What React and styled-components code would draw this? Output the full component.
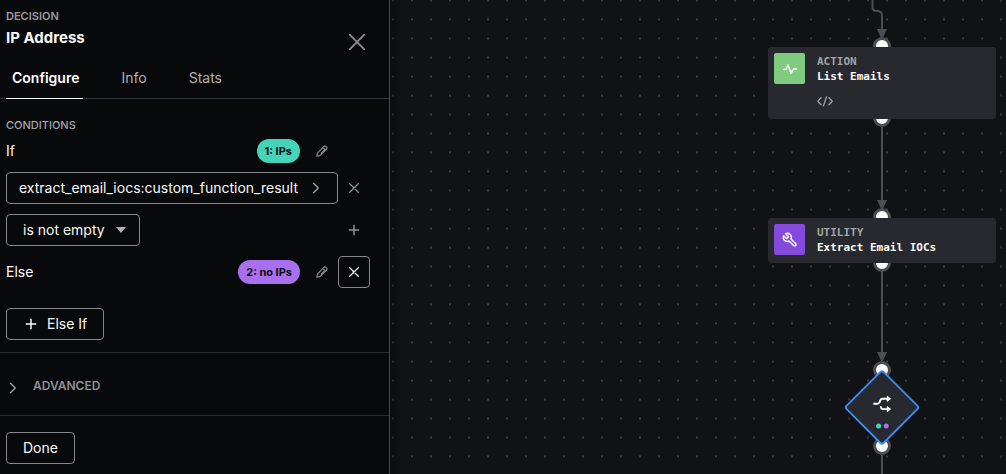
import React from "react";
import styled, { createGlobalStyle } from "styled-components";

const GlobalStyle = createGlobalStyle`
  *, *::before, *::after { box-sizing: border-box; }
  body { margin: 0; background: #111215; }
  button, select { font: inherit; color: inherit; margin: 0; }
`;

const Page = styled.div`
  display: flex;
  min-height: 100vh;
  font-family: Inter, "Liberation Sans", sans-serif;
  font-size: 14px;
  line-height: 20px;
  color: #fafafa;
`;

const Panel = styled.aside`
  flex: none;
  width: 390px;
  background: #08090a;
  border-right: 1px solid #48494d;
`;

const Header = styled.header`
  display: flex;
  justify-content: space-between;
  padding: 8px 20px 0 6px;
`;

const Kicker = styled.div`
  font-size: 11px;
  line-height: 16px;
  font-weight: 600;
  color: #9b9c9f;
`;

const Title = styled.h1`
  margin: 4px 0 0;
  font-size: 15px;
  line-height: 20px;
  font-weight: 700;
`;

const IconButton = styled.button`
  display: flex;
  flex: none;
  align-items: center;
  justify-content: center;
  width: ${(p) => (p.$small ? 24 : 32)}px;
  height: ${(p) => (p.$small ? 24 : 32)}px;
  padding: 0;
  background: none;
  border: 1px solid ${(p) => (p.$outlined ? "#85868a" : "transparent")};
  border-radius: 4px;
  color: ${(p) => (p.$outlined ? "#fafafa" : "#909194")};
  cursor: pointer;
`;

const CloseSlot = styled.div`
  padding-top: 22px;
`;

const Tabs = styled.nav`
  display: flex;
  gap: 32px;
  padding: 4px 6px 0;
  border-bottom: 1px solid #2f3138;
`;

const Tab = styled.button`
  padding: 10px 4px 10px 6px;
  margin-bottom: -1px;
  background: none;
  border: 0;
  border-bottom: 1px solid ${(p) => (p.$active ? "#ffffff" : "transparent")};
  color: ${(p) => (p.$active ? "#ffffff" : "#b0b1b4")};
  font-weight: ${(p) => (p.$active ? 600 : 400)};
  cursor: pointer;
`;

const Section = styled.section`
  padding: 18px 19px 12px 6px;
  border-bottom: 1px solid #2a2b2e;
`;

const SectionLabel = styled.h2`
  margin: 0;
  font-size: 11px;
  line-height: 16px;
  font-weight: 500;
  color: #a5a6a9;
`;

const Row = styled.div`
  display: flex;
  align-items: center;
  min-height: 32px;
  margin-top: ${(p) => p.$gap || 0}px;
`;

const RowLabel = styled.span`
  flex: 1;
`;

const Pill = styled.span`
  padding: 0 8px;
  margin-right: 6px;
  border-radius: 12px;
  background: ${(p) => p.$color};
  color: #08090a;
  font-size: 11px;
  line-height: 24px;
  font-weight: 700;
`;

const OutlineButton = styled.button`
  display: inline-flex;
  align-items: center;
  gap: 8px;
  height: 32px;
  padding: 0 16px;
  background: none;
  border: 1px solid #85868a;
  border-radius: 4px;
  cursor: pointer;
`;

const DataPath = styled(OutlineButton)`
  flex: 1;
  justify-content: space-between;
  padding: 0 17px 0 12px;
`;

const SelectWrap = styled.div`
  position: relative;
  width: 134px;
  margin-right: auto;
`;

const Select = styled.select`
  width: 100%;
  height: 32px;
  padding: 0 32px 0 16px;
  appearance: none;
  background: none;
  border: 1px solid #85868a;
  border-radius: 4px;
`;

const SelectArrow = styled.svg`
  position: absolute;
  right: 14px;
  top: 13px;
  pointer-events: none;
`;

const Advanced = styled.button`
  display: flex;
  align-items: center;
  gap: 16px;
  width: 100%;
  height: 63px;
  padding: 7px 9px 0;
  background: none;
  border: 0;
  border-bottom: 1px solid #2a2b2e;
  color: #909194;
  font-size: 12px;
  font-weight: 600;
  text-align: left;
  cursor: pointer;
`;

const AdvancedLabel = styled.span`
  padding-bottom: 4px;
`;

const Footer = styled.footer`
  padding: 16px 6px 10px;
`;

const Canvas = styled.main`
  position: relative;
  flex: 1;
  min-width: 0;
  overflow: hidden;
  background:
    linear-gradient(90deg, rgba(0, 0, 0, 0.3), transparent 12px),
    url("data:image/svg+xml,%3Csvg xmlns='http://www.w3.org/2000/svg' width='19' height='19'%3E%3Cpath fill='%2326272a' d='M0 0h2v3H0z'/%3E%3Cpath fill='%233a3b3e' d='M0 1h2v1H0z'/%3E%3C/svg%3E") 2px -1px,
    #111215;
`;

const Edges = styled.svg`
  position: absolute;
  left: 0;
  top: 0;
`;

const Node = styled.article`
  position: absolute;
  left: 378px;
  top: ${(p) => p.$top}px;
  display: flex;
  gap: 12px;
  width: 228px;
  min-height: ${(p) => p.$height}px;
  padding: 6px;
  background: #28292e;
  border-radius: 3px;
  font-family: "DejaVu Sans Mono", "Liberation Mono", monospace;
  font-size: 11px;
  line-height: 15px;
  font-weight: 700;
`;

const NodeIcon = styled.div`
  display: flex;
  flex: none;
  align-items: center;
  justify-content: center;
  width: 31px;
  height: 31px;
  border-radius: 2px;
  background: ${(p) => p.$color};
`;

const NodeText = styled.div`
  padding-top: 1px;
`;

const NodeKind = styled.div`
  color: #a2a3a6;
`;

const NodeCode = styled.div`
  display: flex;
  margin-top: 12px;
`;

const Decision = styled.svg`
  position: absolute;
  left: 453px;
  top: 369px;
`;

const Cross = ({ size = 10, width = 1.3 }) => (
  <svg width={size} height={size} viewBox={`0 0 ${size} ${size}`} fill="none" stroke="currentColor" strokeWidth={width} strokeLinecap="round" aria-hidden="true">
    <path d={`M.7.7L${size - 0.7} ${size - 0.7}M${size - 0.7}.7L.7 ${size - 0.7}`} />
  </svg>
);

const Plus = ({ box = 12 }) => (
  <svg width={box} height="12" viewBox={`${(12 - box) / 2} 0 ${box} 12`} fill="none" stroke="currentColor" strokeWidth="1.5" aria-hidden="true">
    <path d="M6 .8v10.4M.8 6h10.4" />
  </svg>
);

const Chevron = () => (
  <svg width="8" height="12" viewBox="0 0 8 12" fill="none" stroke="#a0a1a4" strokeWidth="1.4" strokeLinecap="round" strokeLinejoin="round" aria-hidden="true">
    <path d="M1.5 1.2L6.3 6l-4.8 4.8" />
  </svg>
);

const Pencil = () => (
  <svg width="12" height="12" viewBox="0 0 12 12" fill="none" stroke="currentColor" strokeWidth="1.1" strokeLinejoin="round" aria-hidden="true">
    <path d="M.8 11.200l.6-3.100L8 1.400a1.350 1.350 0 0 1 1.900 0l.7.7a1.350 1.350 0 0 1 0 1.900L3.900 10.600z" />
    <path d="M7.300 3.200L8.800 4.700L5 8.500" />
  </svg>
);

const handles = [46, 118, 217, 263, 370, 446];

export default function App() {
  return (
    <Page>
      <GlobalStyle />
      <Panel>
        <Header>
          <div>
            <Kicker>DECISION</Kicker>
            <Title>IP Address</Title>
          </div>
          <CloseSlot>
            <IconButton $small aria-label="Close"><Cross size={16} width={1.7} /></IconButton>
          </CloseSlot>
        </Header>
        <Tabs>
          <Tab $active>Configure</Tab>
          <Tab>Info</Tab>
          <Tab>Stats</Tab>
        </Tabs>
        <Section>
          <SectionLabel>CONDITIONS</SectionLabel>
          <Row $gap={2}>
            <RowLabel>If</RowLabel>
            <Pill $color="#45d4ba">1: IPs</Pill>
            <IconButton aria-label="Edit label 1"><Pencil /></IconButton>
            <IconButton as="span" aria-hidden="true" />
          </Row>
          <Row $gap={5}>
            <DataPath>extract_email_iocs:custom_function_result<Chevron /></DataPath>
            <IconButton aria-label="Remove condition"><Cross /></IconButton>
          </Row>
          <Row $gap={10}>
            <SelectWrap>
              <Select aria-label="Operator" defaultValue="is not empty">
                <option>is not empty</option>
              </Select>
              <SelectArrow width="10" height="6" aria-hidden="true">
                <path d="M0 0h10L5 6z" fill="#b0b1b4" />
              </SelectArrow>
            </SelectWrap>
            <IconButton aria-label="Add condition"><Plus /></IconButton>
          </Row>
          <Row $gap={10}>
            <RowLabel>Else</RowLabel>
            <Pill $color="#a870ef">2: no IPs</Pill>
            <IconButton aria-label="Edit label 2"><Pencil /></IconButton>
            <IconButton $outlined aria-label="Remove else"><Cross /></IconButton>
          </Row>
          <Row $gap={20}>
            <OutlineButton><Plus box={16} />Else If</OutlineButton>
          </Row>
        </Section>
        <Advanced>
          <Chevron />
          <AdvancedLabel>ADVANCED</AdvancedLabel>
        </Advanced>
        <Footer>
          <OutlineButton>Done</OutlineButton>
        </Footer>
      </Panel>
      <Canvas>
        <Edges width="100%" height="100%" aria-hidden="true">
          <g fill="none" stroke="#4d4e53" strokeWidth="2">
            <path d="M482.500 0V7q0 4 4 4h1q4.500 0 4.500 5V35M492 119V208M492 263V360M492 446V2000" />
          </g>
          <g fill="#4d4e53">
            <path d="M487 29h10l-5 11zM487 200h10l-5 11zM487 352h10l-5 11z" />
          </g>
          <g fill="#ffffff" stroke="#4d4e53" strokeWidth="3">
            {handles.map((y) => <circle key={y} cx="492" cy={y} r="7.5" />)}
          </g>
        </Edges>
        <Node $top={47} $height={72}>
          <NodeIcon $color="#7fcc80">
            <svg width="16" height="14" viewBox="0 0 16 14" fill="none" stroke="#fff" strokeWidth="1.5" strokeLinecap="round" strokeLinejoin="round" aria-hidden="true">
              <path d="M1.500 7.500H4l2-4.500L9 11.300 11.400 7h3.100" />
            </svg>
          </NodeIcon>
          <NodeText>
            <NodeKind>ACTION</NodeKind>
            <div>List Emails</div>
            <NodeCode>
              <svg width="16" height="11" viewBox="0 0 16 11" fill="none" stroke="#a0a1a4" strokeWidth="1.3" strokeLinecap="round" strokeLinejoin="round" aria-hidden="true">
                <path d="M4 1.800L.8 5.300 4 8.800M12 1.800l3.200 3.500L12 8.800M9.500.8l-3 9" />
              </svg>
            </NodeCode>
          </NodeText>
        </Node>
        <Node $top={218} $height={45}>
          <NodeIcon $color="#8549dc">
            <svg width="16" height="16" viewBox="0 0 24 24" fill="none" stroke="#fff" strokeWidth="2.2" strokeLinecap="round" strokeLinejoin="round" aria-hidden="true">
              <path transform="translate(24 0) scale(-1 1)" d="M14.700 6.300a1 1 0 0 0 0 1.400l1.600 1.600a1 1 0 0 0 1.400 0l3.770-3.770a6 6 0 0 1-7.940 7.940l-6.910 6.910a2.120 2.120 0 0 1-3-3l6.910-6.910a6 6 0 0 1 7.940-7.940l-3.760 3.760z" />
            </svg>
          </NodeIcon>
          <NodeText>
            <NodeKind>UTILITY</NodeKind>
            <div>Extract Email IOCs</div>
          </NodeText>
        </Node>
        <Decision width="78" height="78" viewBox="0 0 78 78" role="img" aria-label="Decision">
          <rect x="12.8" y="12.2" width="52.4" height="52.4" rx="2.5" transform="rotate(45 39 38.4)" fill="#28292e" stroke="#3a8cf0" strokeWidth="2" />
          <g fill="none" stroke="#fff" strokeWidth="1.9">
            <path d="M30.300 34.800H34.500q1.500 0 2-1.500l.8-2q.6-1.500 2-1.500h6M37.800 37.200v.5q.2 2.200 2 2.400h5.500" />
          </g>
          <g fill="#fff" stroke="#fff" strokeWidth="1" strokeLinejoin="round">
            <path d="M44.300 27.300l3.200 2.500-3.200 2.500zM44.300 37.600l3.200 2.500-3.200 2.500z" />
          </g>
          <circle cx="35.6" cy="57" r="2.5" fill="#45d4ba" />
          <circle cx="43.2" cy="57" r="2.5" fill="#a870ef" />
        </Decision>
      </Canvas>
    </Page>
  );
}
